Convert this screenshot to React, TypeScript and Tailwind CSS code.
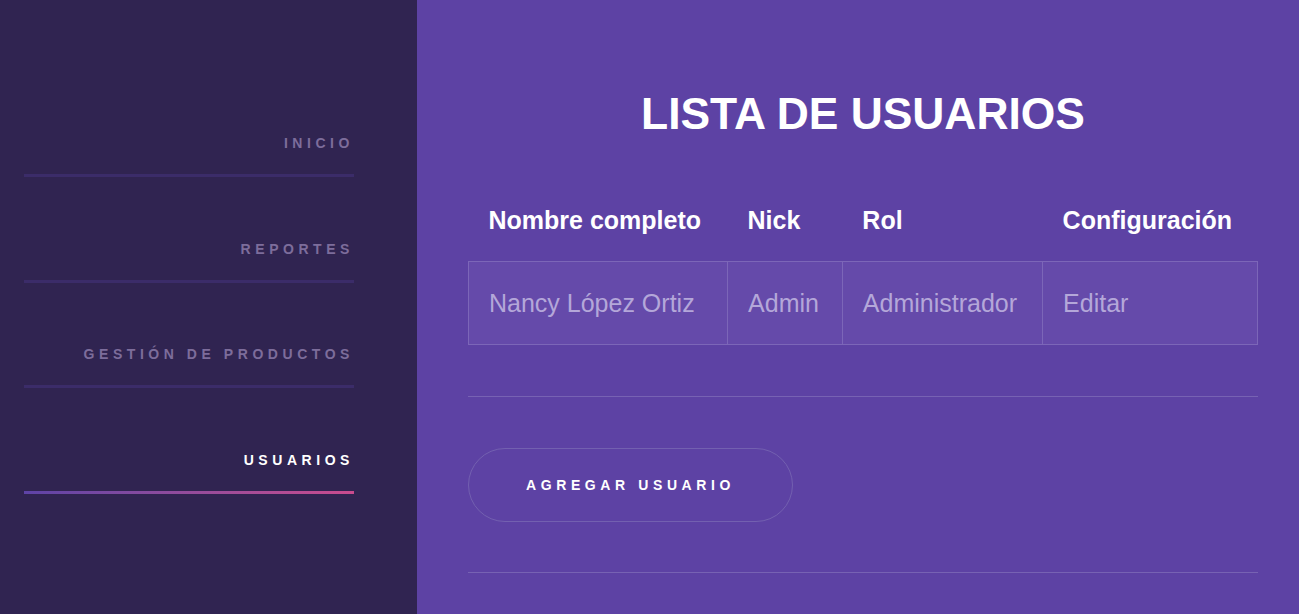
const navItems = [
  { label: "INICIO", active: false },
  { label: "REPORTES", active: false },
  { label: "GESTIÓN DE PRODUCTOS", active: false },
  { label: "USUARIOS", active: true },
];

const columns = ["Nombre completo", "Nick", "Rol", "Configuración"];

const users = [
  { name: "Nancy López Ortiz", nick: "Admin", role: "Administrador", action: "Editar" },
];

const App = () => {
  return (
    <div className="flex min-h-[614px] w-full font-['Liberation_Sans',Arial,sans-serif]">
      {/* Sidebar */}
      <aside className="w-[417px] shrink-0 bg-[#302451] pt-[72px]">
        <nav className="ml-[24px] flex w-[330px] flex-col">
          {navItems.map((item) => (
            <a
              key={item.label}
              href="#"
              className={
                item.active
                  ? "relative block pt-[61.4px] pb-[24px] text-right text-[14px] leading-[20px] font-bold tracking-[4.55px] text-white"
                  : "block border-b-[3px] border-[#3b2c69] pt-[61.4px] pb-[21px] text-right text-[14px] leading-[20px] font-bold tracking-[4.55px] text-[#7d6d9b]"
              }
            >
              {item.label}
              {item.active && (
                <span className="absolute bottom-0 left-0 h-[3px] w-full bg-gradient-to-r from-[#5e43a6] to-[#c94b8e]" />
              )}
            </a>
          ))}
        </nav>
      </aside>

      {/* Main */}
      <main className="flex-1 bg-[#5d42a4] pt-[88px] pl-[51px] pr-[41px]">
        <div className="w-[790px]">
          <h1 className="text-center text-[44.4px] leading-[52px] font-bold text-white">
            LISTA DE USUARIOS
          </h1>

          <table className="mt-[39px] w-full border-collapse text-[25px] leading-[42px]">
            <thead>
              <tr>
                {columns.map((col) => (
                  <th key={col} className="p-[20px] text-left font-bold text-white">
                    {col}
                  </th>
                ))}
              </tr>
            </thead>
            <tbody>
              {users.map((u) => (
                <tr key={u.name} className="bg-[#654aaa] text-[#b4a7d9]">
                  <td className="border border-[#7c66b8] p-[20px]">{u.name}</td>
                  <td className="border border-[#7c66b8] p-[20px]">{u.nick}</td>
                  <td className="border border-[#7c66b8] p-[20px]">{u.role}</td>
                  <td className="border border-[#7c66b8] p-[20px]">{u.action}</td>
                </tr>
              ))}
            </tbody>
          </table>

          <hr className="mt-[51px] border-0 border-t border-[#7762b3]" />

          <button className="mt-[51px] flex h-[74px] w-[325px] items-center justify-center rounded-full border border-[#7360b0] text-[14px] font-bold tracking-[4.6px] text-white">
            AGREGAR USUARIO
          </button>

          <hr className="mt-[50px] border-0 border-t border-[#7762b3]" />
        </div>
      </main>
    </div>
  );
};

export default App;
